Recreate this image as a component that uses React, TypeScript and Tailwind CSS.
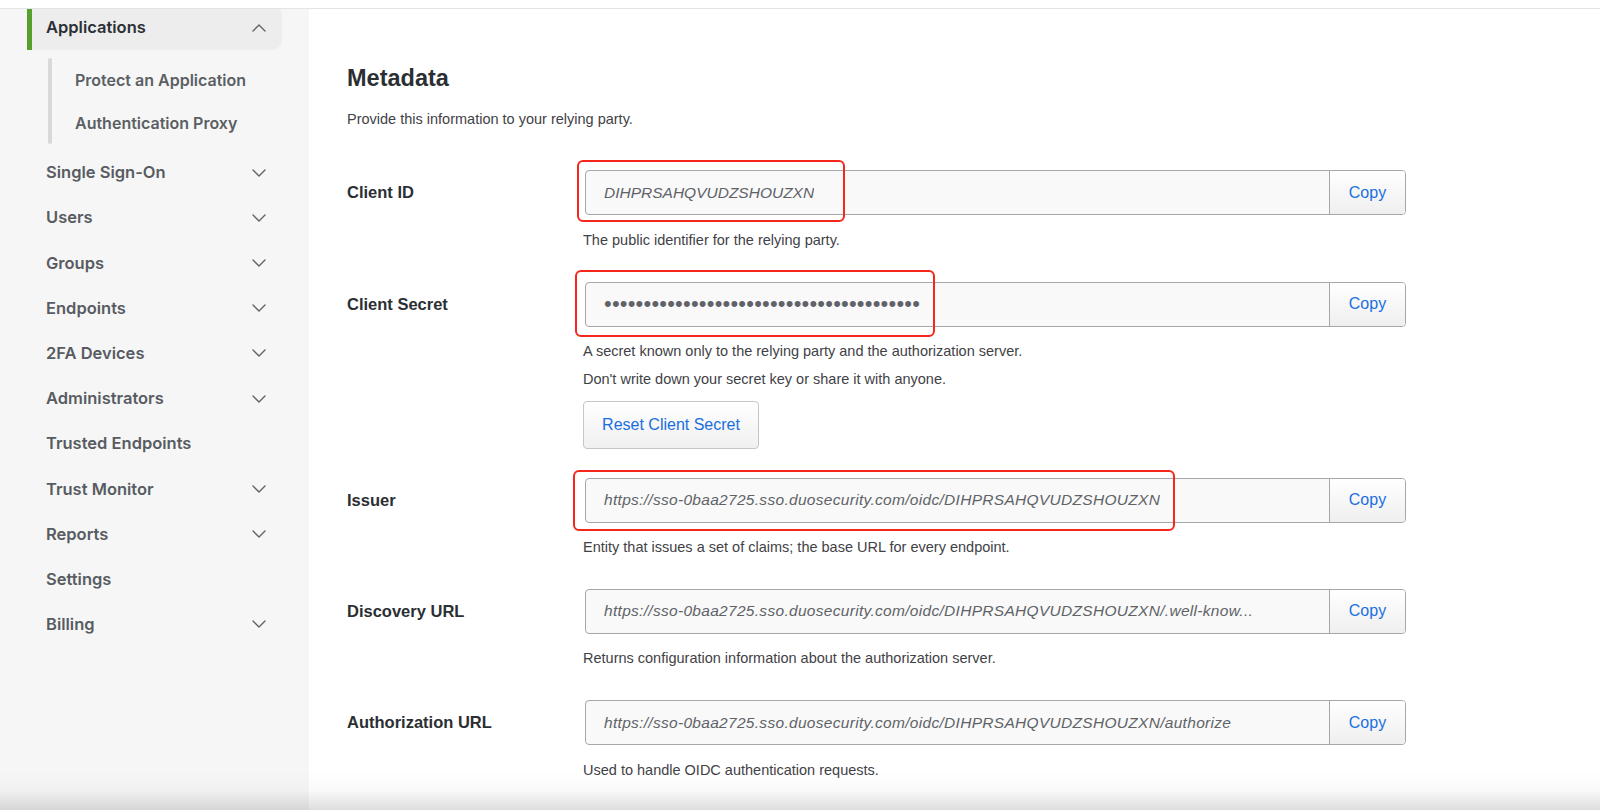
import React from "react"

interface NavItem {
  label: string
  hasChildren: boolean
}

const navItems: NavItem[] = [
  { label: "Single Sign-On", hasChildren: true },
  { label: "Users", hasChildren: true },
  { label: "Groups", hasChildren: true },
  { label: "Endpoints", hasChildren: true },
  { label: "2FA Devices", hasChildren: true },
  { label: "Administrators", hasChildren: true },
  { label: "Trusted Endpoints", hasChildren: false },
  { label: "Trust Monitor", hasChildren: true },
  { label: "Reports", hasChildren: true },
  { label: "Settings", hasChildren: false },
  { label: "Billing", hasChildren: true },
]

function Chevron({ up = false }: { up?: boolean }) {
  return (
    <svg width="14" height="8" viewBox="0 0 14 8" fill="none" className={up ? "rotate-180" : ""}>
      <path d="M1 1l6 6 6-6" stroke="#5f6368" strokeWidth="1.4" strokeLinecap="round" strokeLinejoin="round" />
    </svg>
  )
}

function Sidebar() {
  return (
    <aside className="w-[309px] shrink-0 overflow-hidden bg-[#f6f6f6] font-['Inter',sans-serif] font-semibold">
      <div className="-mt-[4px]">
        <div className="ml-[27px] flex h-[45px] w-[255px] items-center justify-between rounded-r-[10px] border-l-[5px] border-[#58a02e] bg-[#ededed] pl-[14px] pr-[16px]">
          <span className="text-[16.5px] text-[#2c3036]">Applications</span>
          <Chevron up />
        </div>
        <div className="ml-[48px] mt-[8px] flex">
          <div className="w-[4px] rounded-full bg-[#d9d9d9]" />
          <div className="pl-[23px]">
            <div className="flex h-[43px] items-center text-[16px] text-[#5b5f64]">Protect an Application</div>
            <div className="flex h-[43px] items-center text-[16px] text-[#5b5f64]">Authentication Proxy</div>
          </div>
        </div>
        <div className="mt-[6px]">
          {navItems.map((item) => (
            <div
              key={item.label}
              className="ml-[27px] flex h-[45.2px] w-[255px] items-center justify-between pl-[19px] pr-[16px]"
            >
              <span className="text-[16.5px] text-[#585c62]">{item.label}</span>
              {item.hasChildren && <Chevron />}
            </div>
          ))}
        </div>
      </div>
    </aside>
  )
}

interface FieldProps {
  label: string
  value: string
  kind?: "id" | "url" | "secret"
  help: string[]
  highlight?: { left: number; top: number; width: number; height: number }
  className?: string
  children?: React.ReactNode
}

function Field({ label, value, kind = "url", help, highlight, className, children }: FieldProps) {
  return (
    <div className={`flex ${className ?? ""}`}>
      <div className="flex h-[45px] w-[236px] shrink-0 items-center text-[16.5px] font-bold text-[#2b2f33]">{label}</div>
      <div className="w-[823px]">
        <div className="relative ml-[2px]">
          <div className="flex h-[45px] overflow-hidden rounded-[4px] border border-[#a4a7ac] bg-[#f9f9f9]">
            <div className="flex min-w-0 flex-1 items-center pl-[18px] pr-[12px]">
              {kind === "secret" ? (
                <span className="whitespace-nowrap text-[22px] leading-none tracking-[0.2px] text-[#5f6368]">
                  {value}
                </span>
              ) : (
                <span
                  className={`overflow-hidden whitespace-nowrap text-[15.5px] italic text-[#5f6368] ${
                    kind === "url" ? "tracking-[0.3px]" : ""
                  }`}
                >
                  {value}
                </span>
              )}
            </div>
            <button className="w-[76px] shrink-0 border-l border-[#a4a7ac] bg-gradient-to-b from-white to-[#efefef] text-[16px] text-[#1a6fe0]">
              Copy
            </button>
          </div>
          {highlight && (
            <div
              className="pointer-events-none absolute rounded-[6px] border-[2.5px] border-[#f5271b]"
              style={{ left: highlight.left, top: highlight.top, width: highlight.width, height: highlight.height }}
            />
          )}
        </div>
        <div className="mt-[14.5px]">
          {help.map((line, i) => (
            <p key={i} className={`text-[14.5px] leading-[20px] text-[#3f4246] ${i > 0 ? "mt-[7.5px]" : ""}`}>
              {line}
            </p>
          ))}
        </div>
        {children}
      </div>
    </div>
  )
}

export default function App() {
  const base = "https://sso-0baa2725.sso.duosecurity.com/oidc/DIHPRSAHQVUDZSHOUZXN"

  return (
    <div className="relative h-[810px] w-[1600px] overflow-hidden bg-white font-['Liberation_Sans',Arial,sans-serif]">
      <div className="h-[9px] border-b border-[#e4e4e4] bg-white" />
      <div className="flex h-[801px]">
        <Sidebar />
        <main className="flex-1 pl-[38px] pt-[55px]">
          <h1 className="text-[23.5px] font-bold leading-[28px] text-[#2b2f33]">Metadata</h1>
          <p className="mt-[17px] text-[14.5px] leading-[20px] text-[#3f4246]">
            Provide this information to your relying party.
          </p>

          <Field
            className="mt-[41px]"
            label="Client ID"
            value="DIHPRSAHQVUDZSHOUZXN"
            kind="id"
            help={["The public identifier for the relying party."]}
            highlight={{ left: -8, top: -10, width: 268, height: 62 }}
          />

          <Field
            className="mt-[32px]"
            label="Client Secret"
            value={"•".repeat(40)}
            kind="secret"
            help={[
              "A secret known only to the relying party and the authorization server.",
              "Don't write down your secret key or share it with anyone.",
            ]}
            highlight={{ left: -10, top: -12, width: 360, height: 67 }}
          >
            <button className="mt-[12px] h-[48px] w-[176px] rounded-[4px] border border-[#c4c6c9] bg-gradient-to-b from-white to-[#f0f0f0] text-[16px] text-[#1a6fe0]">
              Reset Client Secret
            </button>
          </Field>

          <Field
            className="mt-[29px]"
            label="Issuer"
            value={base}
            help={["Entity that issues a set of claims; the base URL for every endpoint."]}
            highlight={{ left: -12, top: -8, width: 602, height: 61 }}
          />

          <Field
            className="mt-[31.5px]"
            label="Discovery URL"
            value={`${base}/.well-know...`}
            help={["Returns configuration information about the authorization server."]}
          />

          <Field
            className="mt-[32px]"
            label="Authorization URL"
            value={`${base}/authorize`}
            help={["Used to handle OIDC authentication requests."]}
          />
        </main>
      </div>
      <div className="pointer-events-none absolute bottom-0 left-0 right-0 h-[40px] bg-gradient-to-b from-transparent via-[#00000005] to-[#00000022]" />
    </div>
  )
}
